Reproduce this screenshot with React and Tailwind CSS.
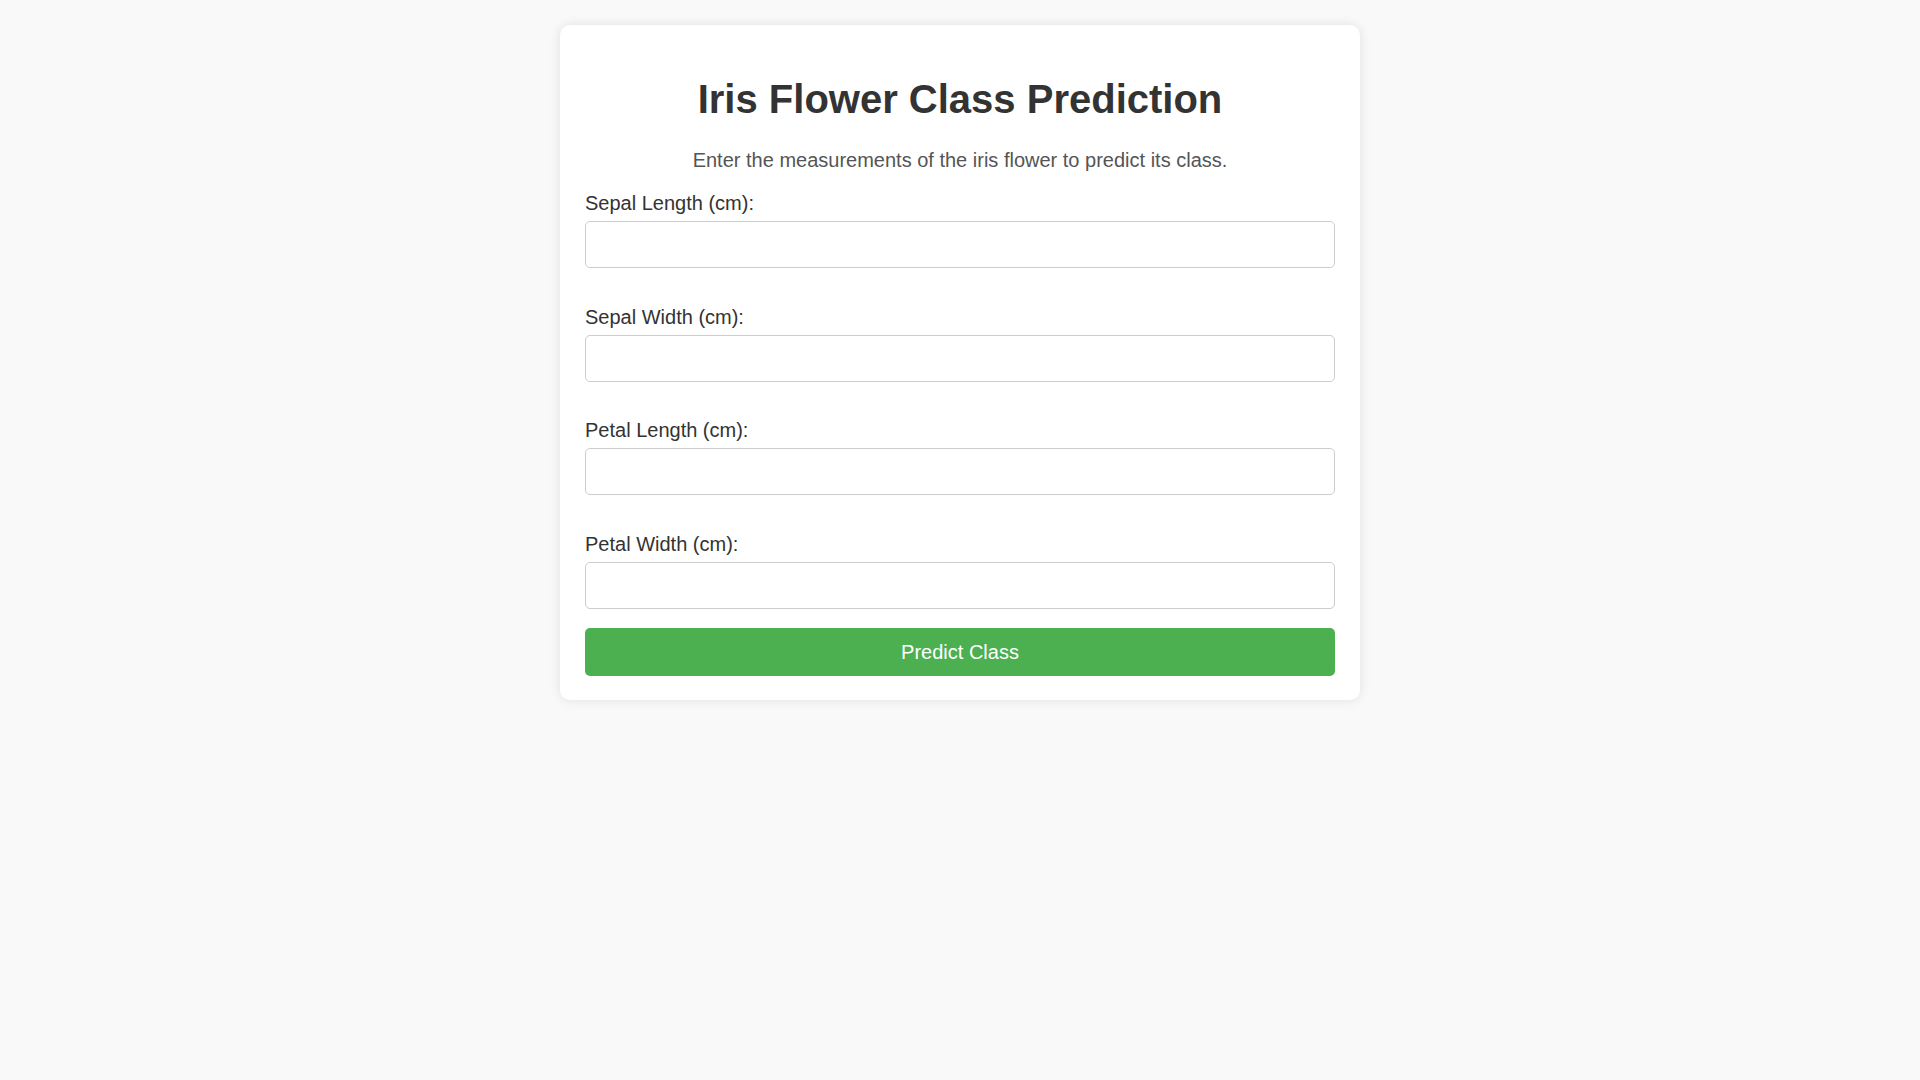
export default function App() {
  const fields = ["Sepal Length (cm):", "Sepal Width (cm):", "Petal Length (cm):", "Petal Width (cm):"];
  return (
    <div className="min-h-screen w-full bg-[#f9f9f9] pt-[25px] font-['Liberation_Sans',Arial,sans-serif]">
      <div className="mx-auto w-[800px] rounded-[10px] bg-white px-[25px] pb-[24px] pt-[51px] shadow-[0_0_12px_rgba(0,0,0,0.1)]">
        <h1 className="text-center text-[40px] font-bold leading-[46px] text-[#333333]">Iris Flower Class Prediction</h1>
        <p className="mt-[27px] text-center text-[20px] leading-[23px] text-[#555555]">
          Enter the measurements of the iris flower to predict its class.
        </p>
        <form className="mt-[20px] flex flex-col" onSubmit={(e) => e.preventDefault()}>
          {fields.map((f, i) => (
            <div key={f} className={i < 3 ? "mb-[37.5px]" : "mb-[19px]"}>
              <label className="block text-[20px] leading-[23px] text-[#333333]">{f}</label>
              <input
                type="number"
                className="mt-[6px] block h-[47px] w-full rounded-[5px] border border-[#cccccc] bg-white px-[12px] text-[20px] outline-none"
              />
            </div>
          ))}
          <button
            type="submit"
            className="h-[48px] w-full rounded-[5px] bg-[#4caf50] text-[20px] text-white"
          >
            Predict Class
          </button>
        </form>
      </div>
    </div>
  );
}
